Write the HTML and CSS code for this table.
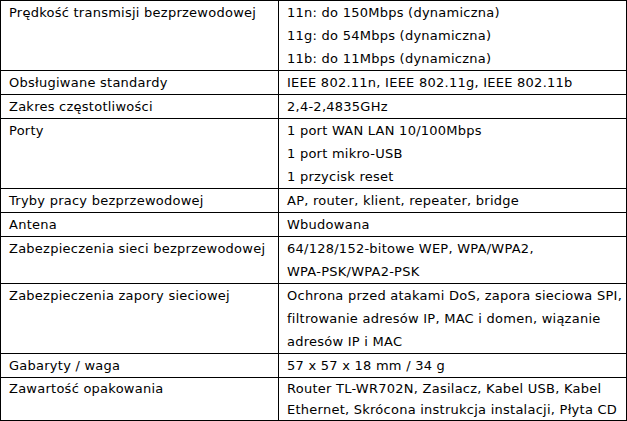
FILE: index.html
```html
<!DOCTYPE html>
<html lang="pl">
<head>
<meta charset="utf-8">
<title>Specyfikacja</title>
<link rel="stylesheet" href="styles.css">
</head>
<body>
<table class="spec">
  <colgroup><col class="c-name"><col class="c-value"></colgroup>
  <tr><td>Prędkość transmisji bezprzewodowej</td><td>11n: do 150Mbps (dynamiczna)<br>11g: do 54Mbps (dynamiczna)<br>11b: do 11Mbps (dynamiczna)</td></tr>
  <tr><td>Obsługiwane standardy</td><td>IEEE 802.11n, IEEE 802.11g, IEEE 802.11b</td></tr>
  <tr><td>Zakres częstotliwości</td><td>2,4-2,4835GHz</td></tr>
  <tr><td>Porty</td><td>1 port WAN LAN 10/100Mbps<br>1 port mikro-USB<br>1 przycisk reset</td></tr>
  <tr><td>Tryby pracy bezprzewodowej</td><td>AP, router, klient, repeater, bridge</td></tr>
  <tr><td>Antena</td><td>Wbudowana</td></tr>
  <tr><td>Zabezpieczenia sieci bezprzewodowej</td><td>64/128/152-bitowe WEP, WPA/WPA2,<br>WPA-PSK/WPA2-PSK</td></tr>
  <tr><td>Zabezpieczenia zapory sieciowej</td><td>Ochrona przed atakami DoS, zapora sieciowa SPI,<br>filtrowanie adresów IP, MAC i domen, wiązanie<br>adresów IP i MAC</td></tr>
  <tr><td>Gabaryty / waga</td><td>57 x 57 x 18 mm / 34 g</td></tr>
  <tr class="last"><td>Zawartość opakowania</td><td>Router TL-WR702N, Zasilacz, Kabel USB, Kabel<br>Ethernet, Skrócona instrukcja instalacji, Płyta CD</td></tr>
</table>
</body>
</html>
```
FILE: styles.css
```css
html, body {
  margin: 0;
  padding: 0;
  background: #fff;
}
.spec {
  border-collapse: collapse;
  width: 627px;
  table-layout: fixed;
  font-family: "DejaVu Sans", Verdana, sans-serif;
  font-size: 13px;
  letter-spacing: 0.25px;
  line-height: 23px;
  color: #000;
}
.c-name { width: 278px; }
.spec td {
  border: 1px solid #000;
  padding: 0 0 0 8px;
  vertical-align: top;
  white-space: nowrap;
  overflow: hidden;
}
.spec .last td {
  line-height: 21px;
}
```
